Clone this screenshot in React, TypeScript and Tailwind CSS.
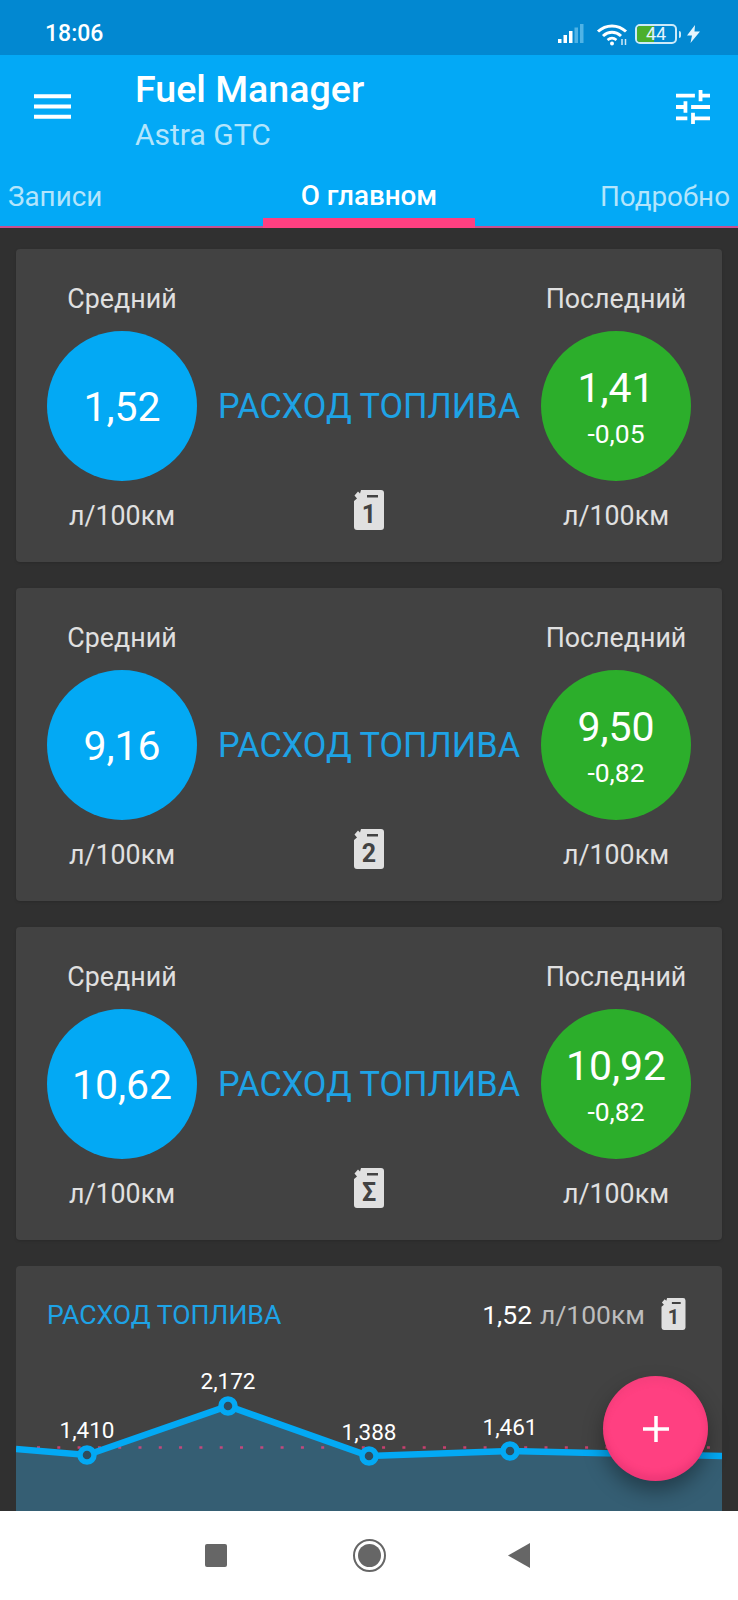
const Jerrycan = ({ label, className }: { label: string; className: string }) => (
  <svg viewBox="0 0 30 40" className={className}>
    <path
      d="M7 0H27a3 3 0 0 1 3 3V37a3 3 0 0 1-3 3H3a3 3 0 0 1-3-3V11L3 8.500 .500 5.500 4 1.500 6 3.500z"
      fill="#e0e0e0"
    />
    <rect x="13" y="5" width="11" height="2.500" fill="#424242" />
    <text
      x="15"
      y="33"
      textAnchor="middle"
      fontSize="25"
      fontWeight="700"
      fill="#424242"
      fontFamily="Roboto, sans-serif"
    >
      {label}
    </text>
  </svg>
);

const StatusIcons = () => (
  <div className="flex items-center">
    <svg viewBox="0 0 26 20" className="w-[26px] h-[20px]">
      <rect x="0" y="15" width="3.500" height="4" fill="#fff" />
      <rect x="5.500" y="11" width="3.500" height="8" fill="#fff" />
      <rect x="11" y="7" width="3.500" height="12" fill="#fff" />
      <rect x="16.500" y="3.500" width="3.500" height="15.500" fill="#4fb3e6" />
      <rect x="22" y="0" width="3.500" height="19" fill="#4fb3e6" />
    </svg>
    <svg viewBox="0 0 32 23" className="w-[32px] h-[23px] ml-[12px]" fill="none" stroke="#fff">
      <path d="M2 8.500C10 1 22 1 30 8.500" strokeWidth="3" />
      <path d="M7 13c5.500-5 12.500-5 18 0" strokeWidth="3" />
      <path d="M11.500 17c3-2.500 6-2.500 9 0" strokeWidth="2.500" />
      <circle cx="16" cy="20.500" r="2" fill="#fff" stroke="none" />
      <path d="M26 16v6M29.500 16v6" strokeWidth="1.500" stroke="#cfe8f6" />
    </svg>
    <div className="ml-[7px] w-[42px] h-[20px] border-[2.5px] border-[#cdeaf9] rounded-[5px] relative flex items-center justify-center overflow-hidden">
      <div className="absolute left-0 top-0 bottom-0 w-[17px] bg-[#4caf2c]" />
      <span className="relative text-[18px] text-[#e6f5fd] leading-none">44</span>
    </div>
    <div className="ml-[2px] w-[2px] h-[7px] bg-[#cdeaf9] rounded-r-sm" />
    <svg viewBox="0 0 13 18" className="w-[13px] h-[18px] ml-[6px]">
      <path d="M8 0 0 10.500h5L3.500 18 13 6.500H7.500z" fill="#e6f5fd" />
    </svg>
  </div>
);

const Gauge = ({
  value,
  delta,
  color,
}: {
  value: string;
  delta?: string;
  color: string;
}) => (
  <div
    className={`w-[150px] h-[150px] rounded-full flex flex-col items-center justify-center text-white pt-[2px] ${color}`}
  >
    <span className="text-[41px] leading-[48px]">{value}</span>
    {delta && <span className="text-[26.5px] leading-[32px] mt-[6px]">{delta}</span>}
  </div>
);

const ConsumptionCard = ({
  average,
  last,
  delta,
  tank,
}: {
  average: string;
  last: string;
  delta: string;
  tank: string;
}) => (
  <div className="bg-[#424242] rounded-[4px] h-[313px] shrink-0 px-[31px] pt-[34px] grid grid-cols-[150px_1fr_150px] grid-rows-[32px_150px_32px] content-start gap-y-[16px] shadow-sm">
    <div className="text-center text-[26.8px] leading-[32px] text-[#e0e0e0]">Средний</div>
    <div />
    <div className="text-center text-[26.8px] leading-[32px] text-[#e0e0e0] whitespace-nowrap">Последний</div>
    <Gauge value={average} color="bg-[#03a9f4]" />
    <div className="flex items-center justify-center text-[34.3px] text-[#1ea3e6] whitespace-nowrap pt-[2px]">
      РАСХОД ТОПЛИВА
    </div>
    <Gauge value={last} delta={delta} color="bg-[#2cae2b]" />
    <div className="text-center text-[26.8px] leading-[32px] text-[#e0e0e0] mt-[3px]">л/100км</div>
    <div className="flex justify-center -mt-[7px]">
      <Jerrycan label={tank} className="w-[30px] h-[40px] shrink-0" />
    </div>
    <div className="text-center text-[26.8px] leading-[32px] text-[#e0e0e0] mt-[3px]">л/100км</div>
  </div>
);

const ChartCard = () => (
  <div className="bg-[#424242] rounded-t-[4px] h-[400px] shrink-0">
    <div className="flex items-center justify-between pl-[31px] pr-[36px] pt-[33px] h-[64px]">
      <span className="text-[26.6px] text-[#1ea3e6]">РАСХОД ТОПЛИВА</span>
      <div className="flex items-center">
        <span className="text-[26.5px] text-white">1,52</span>
        <span className="text-[26.5px] text-[#bdbdbd] ml-[8px]">л/100км</span>
        <Jerrycan label="1" className="w-[25px] h-[32px] ml-[16px] -mt-[1px]" />
      </div>
    </div>
    <svg viewBox="16 1340 706 180" className="w-[706px] h-[180px] block mt-[9px]">
      <path
        d="M16 1450 87 1456 228 1407 369 1457 510 1452 722 1457V1520H16z"
        fill="#355e73"
      />
      <line
        x1="16"
        y1="1448.500"
        x2="722"
        y2="1448.500"
        stroke="#ff4081"
        strokeOpacity="0.7"
        strokeWidth="2.500"
        strokeDasharray="3 17.300"
        strokeDashoffset="-21"
      />
      <path
        d="M16 1450 87 1456 228 1407 369 1457 510 1452 722 1457"
        fill="none"
        stroke="#03a9f4"
        strokeWidth="6.500"
      />
      {[
        [87, 1456, "1,410", 1439],
        [228, 1407, "2,172", 1390],
        [369, 1457, "1,388", 1441],
        [510, 1452, "1,461", 1436],
      ].map(([x, y, label, ty]) => (
        <g key={label as string}>
          <circle cx={x as number} cy={y as number} r="7" fill="#2f4d5e" stroke="#03a9f4" strokeWidth="5.500" />
          <text
            x={x as number}
            y={ty as number}
            textAnchor="middle"
            fontSize="22.500"
            fill="#fff"
            fontFamily="Roboto, sans-serif"
          >
            {label as string}
          </text>
        </g>
      ))}
    </svg>
  </div>
);

export default function App() {
  return (
    <div className="relative w-[738px] h-[1600px] flex flex-col overflow-hidden bg-[#303030] font-['Roboto',sans-serif]">
      <div className="h-[55px] shrink-0 bg-[#0288d1] flex items-center justify-between pl-[45px] pr-[38px] pt-[13px]">
        <span className="text-[23px] font-medium text-white">18:06</span>
        <StatusIcons />
      </div>

      <header className="h-[173px] shrink-0 bg-[#03a9f6] flex flex-col">
        <div className="h-[111px] flex items-start pl-[34px] pr-[28px]">
          <svg viewBox="3 3 18 18" className="w-[37px] h-[37px] mt-[33px]" fill="#fff">
            <path d="M3 18h18v-2H3v2zm0-5h18v-2H3v2zm0-7v2h18V6H3z" />
          </svg>
          <div className="ml-[64px] flex-1 pt-[12px]">
            <div className="text-[37.6px] leading-[44px] font-medium text-white">Fuel Manager</div>
            <div className="text-[30px] leading-[48px] text-[#b3e5fc]">Astra GTC</div>
          </div>
          <svg viewBox="3 3 18 18" className="w-[34px] h-[34px] mt-[35px]" fill="#fff">
            <path d="M3 17v2h6v-2H3zM3 5v2h10V5H3zm10 16v-2h8v-2h-8v-2h-2v6h2zM7 9v2H3v2h4v2h2V9H7zm14 4v-2H11v2h10zm-6-4h2V7h4V5h-4V3h-2v6z" />
          </svg>
        </div>
        <div className="h-[62px] grid grid-cols-[1fr_212px_1fr] px-[8px] text-[27.8px] shadow-[inset_0_-2px_0_#c7508f]">
          <div className="flex items-center text-[#b3e5fc]">Записи</div>
          <div className="flex items-center justify-center font-medium text-white border-b-[10px] border-[#ff4081] pt-[8px]">
            О главном
          </div>
          <div className="flex items-center justify-end text-[#b3e5fc]">Подробно</div>
        </div>
      </header>

      <main className="flex-1 min-h-0 overflow-hidden px-[16px] pt-[21px] flex flex-col gap-[26px]">
        <ConsumptionCard average="1,52" last="1,41" delta="-0,05" tank="1" />
        <ConsumptionCard average="9,16" last="9,50" delta="-0,82" tank="2" />
        <ConsumptionCard average="10,62" last="10,92" delta="-0,82" tank="Σ" />
        <ChartCard />
      </main>

      <nav className="h-[89px] shrink-0 bg-white flex items-center justify-center gap-[126px] pr-[4px]">
        <div className="w-[22px] h-[23px] bg-[#666] rounded-[2px]" />
        <div className="w-[33px] h-[33px] rounded-full border-[2.5px] border-[#666] flex items-center justify-center">
          <div className="w-[23px] h-[23px] rounded-full bg-[#666]" />
        </div>
        <svg viewBox="0 0 22 25" className="w-[22px] h-[25px] -ml-[4px]">
          <path d="M22 0V25L0 12.500z" fill="#666" />
        </svg>
      </nav>

      <button className="absolute left-[603px] top-[1376px] w-[105px] h-[105px] rounded-full bg-[#ff4081] shadow-[0_10px_20px_rgba(0,0,0,0.35),inset_0_-6px_6px_rgba(190,30,90,0.25),inset_0_6px_6px_rgba(190,60,100,0.12)] flex items-center justify-center">
        <svg viewBox="0 0 26 26" className="w-[26px] h-[26px]" stroke="#fff" strokeWidth="3.500">
          <path d="M13 0V26M0 13H26" />
        </svg>
      </button>
    </div>
  );
}
